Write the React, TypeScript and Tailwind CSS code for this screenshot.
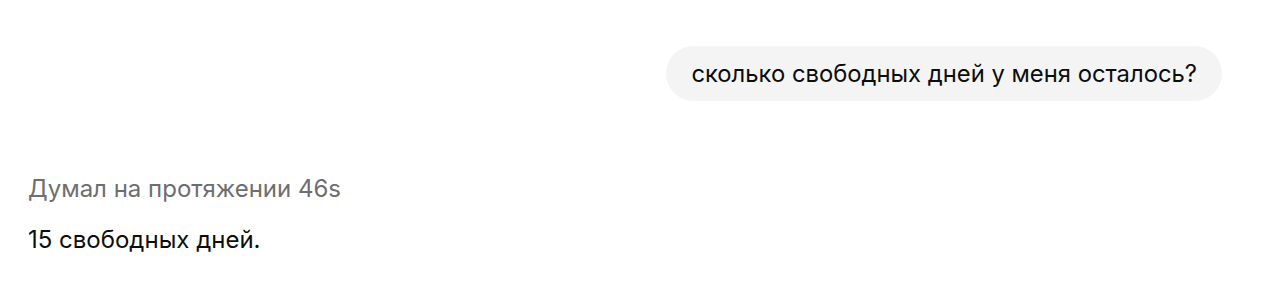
export default function App() {
  return (
    <div
      className="w-[1280px] h-[291px] bg-white text-[#0d0d0d]"
      style={{ fontFamily: 'Inter, "Liberation Sans", Arial, sans-serif' }}
    >
      <div className="flex justify-end pt-[46px] pr-[58px]">
        <div className="h-[55px] rounded-full bg-[#f4f4f4] px-[25px] flex items-center text-[23.8px] leading-[30px] pt-[1px]">
          сколько свободных дней у меня осталось?
        </div>
      </div>
      <div className="pl-[28px] pt-[73px]">
        <div className="text-[24px] leading-[30px] text-[#6e6e6e]">Думал на протяжении 46s</div>
        <div className="mt-[21px] text-[24px] leading-[30px]">15 свободных дней.</div>
      </div>
    </div>
  );
}
